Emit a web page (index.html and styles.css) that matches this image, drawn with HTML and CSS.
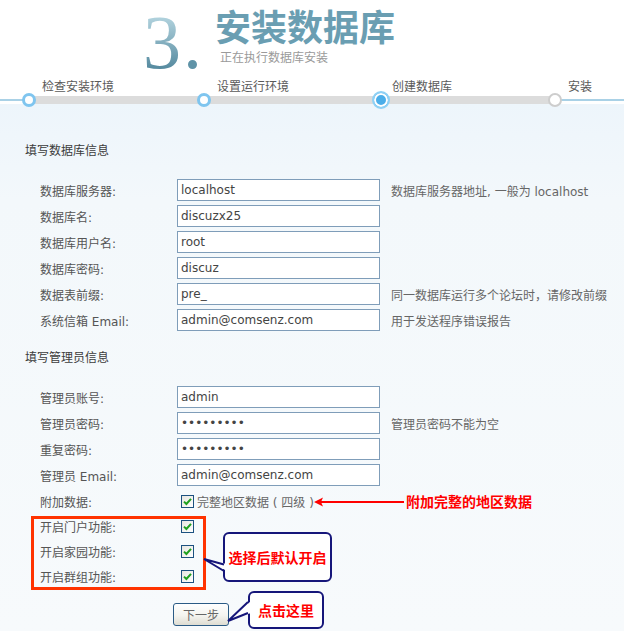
FILE: index.html
```html
<!DOCTYPE html>
<html lang="zh-CN">
<head>
<meta charset="utf-8">
<title>安装数据库</title>
<link rel="stylesheet" href="styles.css">
</head>
<body>
<div class="page">
  <header class="head">
    <svg class="num" width="72" height="90" viewBox="0 0 72 90">
      <defs>
        <linearGradient id="numGrad" gradientUnits="userSpaceOnUse" x1="0" y1="16" x2="0" y2="68">
          <stop offset="0" stop-color="#b3d4df"/>
          <stop offset="1" stop-color="#578ba0"/>
        </linearGradient>
      </defs>
      <text class="num-text" x="0" y="68" fill="url(#numGrad)">3<tspan fill="#5f93a7" dx="2">.</tspan></text>
    </svg>
    <div class="titles">
      <h1 class="title">安装数据库</h1>
      <p class="subtitle">正在执行数据库安装</p>
    </div>
  </header>

  <ol class="steps">
    <li class="step done"><span class="step-label">检查安装环境</span><span class="step-track"><span class="step-dot"></span></span></li>
    <li class="step done"><span class="step-label">设置运行环境</span><span class="step-track"><span class="step-dot"></span></span></li>
    <li class="step current"><span class="step-label">创建数据库</span><span class="step-track"><span class="step-dot"></span></span></li>
    <li class="step todo"><span class="step-label">安装</span><span class="step-track"><span class="step-dot"></span></span></li>
  </ol>

  <main class="main">
    <h2 class="sec-title">填写数据库信息</h2>
    <div class="form form-db">
      <span class="lbl">数据库服务器:</span><input class="txt" type="text" value="localhost"><span class="tip">数据库服务器地址, 一般为 localhost</span>
      <span class="lbl">数据库名:</span><input class="txt" type="text" value="discuzx25"><span class="tip"></span>
      <span class="lbl">数据库用户名:</span><input class="txt" type="text" value="root"><span class="tip"></span>
      <span class="lbl">数据库密码:</span><input class="txt" type="text" value="discuz"><span class="tip"></span>
      <span class="lbl">数据表前缀:</span><input class="txt" type="text" value="pre_"><span class="tip">同一数据库运行多个论坛时，请修改前缀</span>
      <span class="lbl">系统信箱 Email:</span><input class="txt" type="text" value="admin@comsenz.com"><span class="tip">用于发送程序错误报告</span>
    </div>

    <h2 class="sec-title sec-admin">填写管理员信息</h2>
    <div class="form form-admin">
      <span class="lbl">管理员账号:</span><input class="txt" type="text" value="admin"><span class="tip"></span>
      <span class="lbl">管理员密码:</span><input class="txt" type="password" value="123456789"><span class="tip">管理员密码不能为空</span>
      <span class="lbl">重复密码:</span><input class="txt" type="password" value="123456789"><span class="tip"></span>
      <span class="lbl">管理员 Email:</span><input class="txt" type="text" value="admin@comsenz.com"><span class="tip"></span>
      <span class="lbl">附加数据:</span><span class="check-cell"><span class="cb"><svg viewBox="0 0 11 11" width="11" height="11"><path d="M2 5.6 L4.4 8 L9 2.8" fill="none" stroke="#1fa01f" stroke-width="2"/></svg></span><span class="cb-text">完整地区数据 ( 四级 )</span></span><span class="tip"></span>
      <span class="lbl">开启门户功能:</span><span class="check-cell"><span class="cb"><svg viewBox="0 0 11 11" width="11" height="11"><path d="M2 5.6 L4.4 8 L9 2.8" fill="none" stroke="#1fa01f" stroke-width="2"/></svg></span></span><span class="tip"></span>
      <span class="lbl">开启家园功能:</span><span class="check-cell"><span class="cb"><svg viewBox="0 0 11 11" width="11" height="11"><path d="M2 5.6 L4.4 8 L9 2.8" fill="none" stroke="#1fa01f" stroke-width="2"/></svg></span></span><span class="tip"></span>
      <span class="lbl">开启群组功能:</span><span class="check-cell"><span class="cb"><svg viewBox="0 0 11 11" width="11" height="11"><path d="M2 5.6 L4.4 8 L9 2.8" fill="none" stroke="#1fa01f" stroke-width="2"/></svg></span></span><span class="tip"></span>
    </div>

    <div class="actions"><button class="btn" type="button">下一步</button></div>
  </main>

  <!-- annotations drawn over the screenshot -->
  <div class="mark-box"></div>
  <svg class="arrow" width="92" height="12" viewBox="0 0 92 12"><line x1="6" y1="6" x2="90" y2="6" stroke="#ff0000" stroke-width="2"/><polygon points="0,6 9,1.5 7,6 9,10.5" fill="#ff0000"/></svg>
  <div class="note note-area">附加完整的地区数据</div>

  <div class="callout callout-a">选择后默认开启</div>
  <svg class="tail tail-a" width="26" height="20" viewBox="0 0 26 20"><polygon points="2,4 25,9 25,16" fill="#fff"/><polyline points="22,9.5 2,4 22,16" fill="none" stroke="#16167a" stroke-width="2"/></svg>

  <div class="callout callout-b">点击这里</div>
  <svg class="tail tail-b" width="26" height="26" viewBox="0 0 26 26"><polygon points="2,23 25,3 25,15" fill="#fff"/><polyline points="22,4 2,23 22,15" fill="none" stroke="#16167a" stroke-width="2"/></svg>
</div>
</body>
</html>
```

FILE: styles.css
```css
* { box-sizing: border-box; }

html, body {
  margin: 0;
  padding: 0;
}

body {
  font-family: "DejaVu Sans", "Noto Sans CJK SC", sans-serif;
  font-size: 12px;
  color: #555;
  background: #f7fafc;
}

.page {
  position: relative;
  width: 624px;
  height: 631px;
  overflow: hidden;
  background: linear-gradient(to bottom, #ffffff 0, #ffffff 104px, #edf5fb 104px, #f3f8fb 200px, #f7fafc 631px);
}

/* ---------- header ---------- */
.head {
  display: flex;
  align-items: flex-start;
  height: 81px;
  padding-left: 143px;
}

.num {
  display: block;
  flex: none;
}

.num-text {
  font-family: "Liberation Serif", serif;
  font-size: 76px;
}

.titles {
  padding-top: 8px;
}

.title {
  margin: 0;
  font-family: "Liberation Sans", "Noto Sans CJK SC", sans-serif;
  font-size: 36px;
  line-height: 42px;
  font-weight: bold;
  color: #6a9eb2;
}

.subtitle {
  margin: 1px 0 0 5px;
  font-family: "Liberation Sans", "Noto Sans CJK SC", sans-serif;
  font-size: 12px;
  line-height: 14px;
  color: #9a9a9a;
}

/* ---------- steps ---------- */
.steps {
  list-style: none;
  margin: 0;
  padding: 0 0 0 22px;
  height: 23px;
  display: grid;
  grid-template-columns: 175px 175px 176px 1fr;
  background:
    linear-gradient(#dcdcdc, #dcdcdc) 29px 15px / 526px 8px no-repeat,
    linear-gradient(#a9d1e6, #a9d1e6) 0 18px / 100% 2px no-repeat;
}

.step {
  display: flex;
  flex-direction: column;
}

.step-label {
  height: 12px;
  padding-left: 20px;
  line-height: 12px;
  color: #5a5a5a;
  white-space: nowrap;
}

.step-track {
  height: 14px;
  display: flex;
  align-items: center;
}

.step-dot {
  display: block;
  width: 14px;
  height: 14px;
  border-radius: 50%;
  background: #fff;
  border: 3px solid #7fc5ef;
  flex: none;
}

.step.current .step-dot {
  width: 18px;
  height: 18px;
  border: 2px solid #8fd1f5;
  background: #4caee9;
  box-shadow: inset 0 0 0 2px #ffffff;
}

.step.todo .step-dot {
  border: 2px solid #cdcdcd;
}

/* ---------- form ---------- */
.main {
  padding: 41px 0 0 25px;
}

.sec-title {
  margin: 0;
  font-size: 12px;
  line-height: 12px;
  font-weight: normal;
  color: #3c3c3c;
}

.sec-admin {
  margin-top: 19px;
}

.form {
  margin: 20px 0 0 15px;
  display: grid;
  grid-template-columns: 137px 214px 1fr;
  grid-auto-rows: 26px;
  align-items: center;
}

.form-admin {
  grid-template-rows: repeat(5, 26px) repeat(3, 25px);
}

.lbl {
  color: #555;
  white-space: nowrap;
}

.tip {
  color: #666;
  white-space: nowrap;
}

.txt {
  width: 203px;
  height: 22px;
  margin: 0;
  padding: 0 3px;
  border: 1px solid #7f9db9;
  background: #fff;
  font-family: "DejaVu Sans", "Noto Sans CJK SC", sans-serif;
  font-size: 12px;
  color: #444;
  outline: none;
}

.check-cell {
  display: flex;
  align-items: center;
  padding-left: 4px;
}

.cb {
  display: inline-flex;
  align-items: center;
  justify-content: center;
  width: 13px;
  height: 13px;
  border: 1px solid #1c5180;
  background: linear-gradient(135deg, #e6e6e0, #ffffff);
  flex: none;
}

.cb-text {
  margin-left: 3px;
  color: #666;
  white-space: nowrap;
}

.actions {
  margin: 14px 0 0 148px;
}

.btn {
  width: 56px;
  height: 23px;
  margin: 0;
  padding: 0;
  border: 1px solid #2b5b85;
  border-radius: 3px;
  background: linear-gradient(to bottom, #ffffff 0%, #f4f4ef 55%, #dedcd2 100%);
  font-family: "Noto Sans CJK SC", sans-serif;
  font-size: 12px;
  color: #666;
}

/* ---------- annotations (overlay) ---------- */
.mark-box {
  position: absolute;
  left: 31px;
  top: 516px;
  width: 175px;
  height: 74px;
  border: 3px solid #ff3300;
}

.arrow {
  position: absolute;
  left: 314px;
  top: 496px;
}

.note {
  position: absolute;
  font-family: "Noto Sans CJK SC", sans-serif;
  font-size: 14px;
  line-height: 16px;
  font-weight: bold;
  color: #ff0000;
  white-space: nowrap;
}

.note-area {
  left: 406px;
  top: 493px;
}

.callout {
  position: absolute;
  display: flex;
  align-items: center;
  justify-content: center;
  border: 2px solid #16167a;
  border-radius: 6px;
  background: #ffffff;
  font-family: "Noto Sans CJK SC", sans-serif;
  font-size: 14px;
  font-weight: bold;
  color: #ff0000;
  white-space: nowrap;
}

.callout-a {
  left: 223px;
  top: 532px;
  width: 109px;
  height: 50px;
}

.callout-b {
  left: 248px;
  top: 591px;
  width: 76px;
  height: 38px;
}

.tail {
  position: absolute;
}

.tail-a {
  left: 202px;
  top: 555px;
}

.tail-b {
  left: 226px;
  top: 598px;
}
```
